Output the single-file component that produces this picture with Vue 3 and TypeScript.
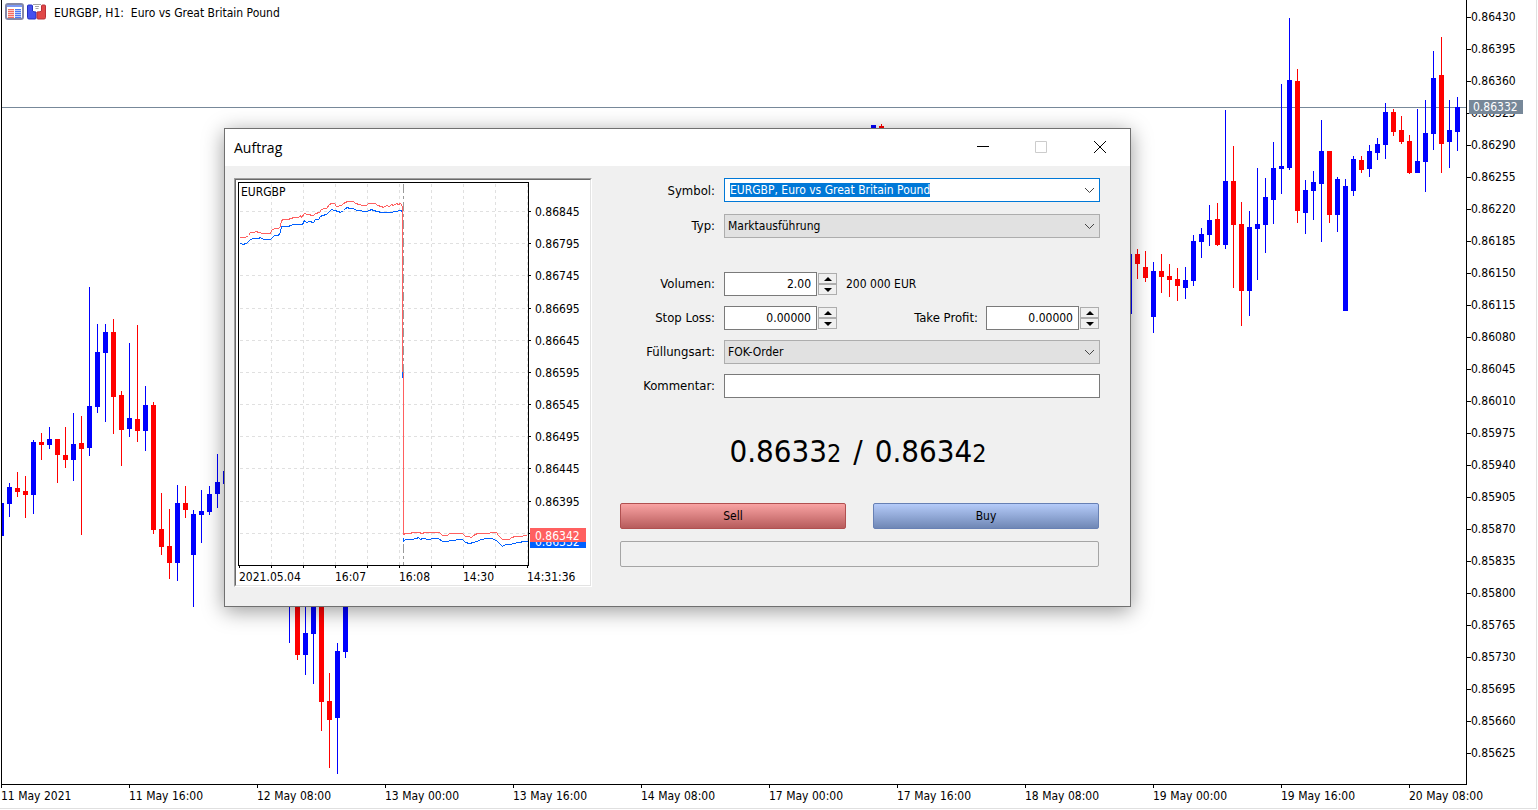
<script setup lang="ts">
import { onMounted, ref } from 'vue'

type Candle = [x: number, color: 'b' | 'r', high: number, top: number, bottom: number, low: number]

const candles: Candle[] = [
  [1, 'b', 503, 503, 536, 536], [9, 'b', 483, 487, 504, 517], [17, 'r', 472, 488, 492, 497],
  [25, 'r', 476, 491, 495, 518], [33, 'b', 440, 442, 495, 514], [41, 'r', 433, 442, 445, 460],
  [49, 'b', 427, 439, 445, 449], [57, 'r', 439, 439, 455, 483], [65, 'r', 427, 455, 460, 468],
  [73, 'b', 413, 444, 460, 481], [81, 'r', 416, 443, 449, 535], [89, 'b', 287, 406, 448, 456],
  [97, 'b', 324, 352, 407, 413], [105, 'b', 324, 332, 353, 422], [113, 'r', 319, 332, 397, 434],
  [121, 'r', 391, 395, 430, 466], [129, 'b', 343, 418, 429, 437], [137, 'r', 325, 419, 431, 442],
  [145, 'b', 386, 405, 431, 451], [153, 'r', 402, 405, 530, 534], [161, 'r', 493, 529, 547, 555],
  [169, 'r', 509, 546, 563, 579], [177, 'b', 485, 503, 563, 581], [185, 'r', 486, 503, 510, 518],
  [193, 'b', 510, 514, 555, 607], [201, 'b', 490, 511, 515, 543], [209, 'b', 486, 494, 512, 515],
  [217, 'b', 454, 482, 494, 508], [225, 'b', 471, 471, 484, 484],
  [289, 'b', 560, 580, 590, 643], [297, 'r', 560, 590, 655, 660], [305, 'b', 590, 633, 655, 675],
  [313, 'b', 590, 600, 634, 684], [321, 'r', 590, 600, 702, 731], [329, 'r', 673, 701, 720, 768],
  [337, 'b', 643, 651, 718, 774], [345, 'b', 560, 590, 652, 658],
  [873, 'b', 125, 125, 140, 145], [881, 'r', 124, 126, 140, 145],
  [1129, 'b', 254, 254, 314, 314], [1137, 'r', 249, 254, 264, 279], [1145, 'r', 251, 267, 278, 282],
  [1153, 'b', 262, 271, 317, 333], [1161, 'r', 254, 271, 277, 293], [1169, 'r', 264, 276, 280, 297],
  [1177, 'r', 268, 279, 286, 301], [1185, 'b', 267, 280, 288, 299], [1193, 'b', 235, 241, 281, 286],
  [1201, 'b', 228, 234, 242, 258], [1209, 'b', 205, 220, 235, 246], [1217, 'r', 203, 219, 245, 246],
  [1225, 'b', 110, 181, 245, 249], [1233, 'r', 146, 181, 225, 288], [1241, 'r', 202, 224, 291, 326],
  [1249, 'b', 211, 227, 291, 316], [1257, 'b', 168, 224, 229, 280], [1265, 'b', 178, 197, 225, 253],
  [1273, 'b', 142, 168, 200, 224], [1281, 'b', 84, 166, 169, 194], [1289, 'b', 18, 80, 168, 170],
  [1297, 'r', 69, 81, 211, 223], [1305, 'b', 180, 190, 213, 234], [1313, 'b', 171, 182, 191, 220],
  [1321, 'b', 120, 151, 184, 242], [1329, 'r', 151, 151, 215, 223], [1337, 'b', 177, 179, 215, 232],
  [1345, 'b', 179, 186, 311, 311], [1353, 'b', 156, 159, 191, 196], [1361, 'r', 156, 160, 170, 173],
  [1369, 'b', 145, 151, 169, 177], [1377, 'b', 138, 144, 153, 160], [1385, 'b', 103, 112, 145, 159],
  [1393, 'r', 109, 112, 132, 136], [1401, 'r', 116, 130, 142, 144], [1409, 'r', 135, 141, 173, 174],
  [1417, 'b', 109, 161, 173, 173], [1425, 'b', 100, 133, 162, 192], [1433, 'b', 51, 78, 134, 150],
  [1441, 'r', 37, 75, 144, 173], [1449, 'b', 100, 130, 142, 168], [1457, 'b', 97, 107, 132, 151],
]

const prices = Array.from({ length: 24 }, (_, i) => ((86430 - i * 35) / 100000).toFixed(5))

const times = [
  '11 May 2021', '11 May 16:00', '12 May 08:00', '13 May 00:00', '13 May 16:00', '14 May 08:00',
  '17 May 00:00', '17 May 16:00', '18 May 08:00', '19 May 00:00', '19 May 16:00', '20 May 08:00',
]

const tickRows = [211, 243, 275, 308, 340, 372, 404, 436, 468, 501, 533]
const tickCols = [271, 303, 335, 367, 399, 431, 463, 495, 527]
const tickPrices = tickRows.slice(0, 10).map((y, i) => ({ y, text: ((86845 - i * 50) / 100000).toFixed(5) }))
const tickTimes = [
  { x: 239, text: '2021.05.04' },
  { x: 335, text: '16:07' },
  { x: 399, text: '16:08' },
  { x: 463, text: '14:30' },
  { x: 527, text: '14:31:36' },
]

const askBefore =
  '239,237 245,237 248,235 250,232 253,232 256,231 258,232 260,232 261,233 270,233 271,230 274,228 278,228 280,226 281,220 283,219 288,219 290,218 294,217 298,217 300,215 301,217 304,213 307,214 313,215 315,213 319,212 321,209 324,208 326,208 329,204 331,203 334,203 336,206 341,205 343,203 345,202 347,201 353,201 355,203 359,204 362,205 366,205 368,203 375,203 377,205 381,206 383,207 386,205 389,206 391,204 393,205 396,203 398,204 400,203 402,206 402,372'
const bidBefore =
  '239,243 241,243 242,244 246,243 248,241 250,239 253,238 258,238 260,237 263,239 270,239 272,237 274,235 277,235 279,234 280,231 281,226 288,226 290,225 293,224 302,224 304,220 306,222 309,221 313,222 315,219 318,219 320,216 322,215 326,214 329,211 331,209 334,210 338,211 340,212 343,210 345,208 347,207 349,208 353,208 356,210 366,211 369,210 371,209 373,210 377,211 381,212 391,212 394,211 401,210 402,212'
const askAfter =
  '403,372 403,534 405,533 409,533 413,532 419,532 421,533 425,532 439,532 442,535 447,535 449,533 462,533 465,536 468,536 471,537 473,535 477,533 483,533 496,532 498,535 502,539 509,539 511,537 515,536 519,536 527,535'
const bidAfter =
  '403,537 403,541 405,539 411,539 416,538 418,537 420,539 422,538 429,539 432,538 438,538 442,541 447,541 450,540 462,539 465,542 469,543 473,542 476,541 481,539 486,538 491,538 496,540 500,544 502,546 505,544 510,544 513,543 519,542 523,541 527,541'

const symbol = ref('EURGBP, Euro vs Great Britain Pound')
const volume = ref('2.00')
const stopLoss = ref('0.00000')
const takeProfit = ref('0.00000')
const comment = ref('')
const symbolInput = ref<HTMLInputElement | null>(null)

function step(current: string, delta: number): string {
  const digits = current.split('.')[1]?.length ?? 0
  return Math.max(0, Number(current) + delta).toFixed(digits)
}

onMounted(() => {
  symbolInput.value?.focus()
  symbolInput.value?.select()
})
</script>

<template>
  <main class="terminal">
    <section class="plot" aria-label="EURGBP, H1">
      <svg class="candles" viewBox="2 0 1464 784" preserveAspectRatio="none" aria-hidden="true">
        <rect x="2" y="107" width="1464" height="1" fill="#778899" />
        <g v-for="c in candles" :key="c[0]" :fill="c[1] === 'b' ? '#0000ff' : '#ff0000'">
          <rect :x="c[0]" :y="c[2]" width="1" :height="c[5] - c[2]" />
          <rect :x="c[0] - 2" :y="c[3]" width="5" :height="c[4] - c[3]" />
        </g>
      </svg>
      <header class="caption">
        <svg width="20" height="18" viewBox="0 0 20 18" aria-hidden="true">
          <rect x="1" y="1" width="17" height="15" rx="2" fill="#fff" stroke="#8488a8" stroke-width="2" />
          <rect x="2" y="2" width="15" height="2" fill="#7c98f4" />
          <rect x="3" y="6" width="6" height="9" fill="#fcc8c0" />
          <rect x="10" y="6" width="6" height="9" fill="#b8ccfc" />
          <path d="M3 6.500h6M3 8.500h6M3 10.500h6M3 12.500h6M3 14.500h6" stroke="#f46c60" />
          <path d="M10 6.500h6M10 8.500h6M10 10.500h6M10 12.500h6M10 14.500h6" stroke="#4c78f4" />
        </svg>
        <svg width="20" height="18" viewBox="0 0 20 18" aria-hidden="true">
          <path d="M.5 3q0-1 1-1h3q1 0 1 1v5q1 1 3.500 1v6q0 1-1 1H2q-1.500 0-1.500-1.500z" fill="#4450f0" stroke="#2430c0" />
          <path d="M18.500 3q0-1-1-1h-2q-1 0-1 1v5q-1 1-4.500 1v6q0 1 1 1h6q1.500 0 1.500-1.500z" fill="#e04848" stroke="#b83038" />
          <path d="M6 1.500h8M8 3.500h4M8.500 5.500h3" stroke="#a4a4a4" />
        </svg>
        <h1>EURGBP, H1:&nbsp; Euro vs Great Britain Pound</h1>
      </header>
    </section>

    <aside class="price-axis">
      <span v-for="p in prices" :key="p">{{ p }}</span>
      <strong class="price-tag">0.86332</strong>
    </aside>

    <footer class="time-axis">
      <span v-for="t in times" :key="t">{{ t }}</span>
    </footer>

    <div class="dialog" role="dialog" aria-labelledby="dialog-title">
      <div class="titlebar">
        <h2 id="dialog-title">Auftrag</h2>
        <button type="button" aria-label="Minimieren">
          <svg width="13" height="13" viewBox="0 0 13 13"><path d="M1 5.500h12" stroke="#000" /></svg>
        </button>
        <button type="button" aria-label="Maximieren" disabled>
          <svg width="13" height="13" viewBox="0 0 13 13"><path d="M.5.5h11v11H.5z" fill="none" stroke="#ccc" /></svg>
        </button>
        <button type="button" aria-label="Schließen">
          <svg width="13" height="13" viewBox="0 0 13 13"><path d="M0 0l12 12M12 0L0 12" stroke="#000" /></svg>
        </button>
      </div>

      <div class="body">
        <div class="ticks">
          <svg width="354" height="405" viewBox="236 180 354 405" role="img" aria-label="EURGBP">
            <g transform="translate(.5 .5)" fill="none" shape-rendering="crispEdges">
              <g stroke="#e0e0e0" stroke-dasharray="3 3">
                <path v-for="y in tickRows" :key="y" :d="`M239 ${y}H527`" />
                <path v-for="x in tickCols" :key="x" :d="`M${x} 183V564`" />
              </g>
              <path d="M403 183V564" stroke="#999" stroke-dasharray="9 3 3 3" />
              <polyline :points="bidBefore" stroke="#0060ff" />
              <polyline :points="askBefore" stroke="#ff6060" />
              <polyline :points="bidAfter" stroke="#0060ff" />
              <polyline :points="askAfter" stroke="#ff6060" />
              <path d="M402 371V377" stroke="#0060ff" />
              <path d="M238 182H528V565H238Z" stroke="#000" />
              <path v-for="y in tickRows" :key="y" :d="`M528 ${y}h2`" stroke="#000" />
              <path v-for="x in [239, ...tickCols]" :key="x" :d="`M${x} 565v2`" stroke="#000" />
            </g>
            <text x="241" y="196">EURGBP</text>
            <text v-for="p in tickPrices" :key="p.y" x="535" :y="p.y + 5">{{ p.text }}</text>
            <text v-for="t in tickTimes" :key="t.x" :x="t.x" y="581">{{ t.text }}</text>
            <rect x="530" y="535" width="56" height="13" fill="#0060ff" />
            <text x="535" y="546" fill="#fff">0.86332</text>
            <rect x="530" y="528" width="56" height="14" fill="#ff6060" />
            <text x="535" y="540" fill="#fff">0.86342</text>
          </svg>
        </div>

        <form class="order" @submit.prevent>
          <div class="fields">
            <label for="symbol">Symbol:</label>
            <div class="combo active">
              <input id="symbol" ref="symbolInput" v-model="symbol" type="text" role="combobox" aria-expanded="false" spellcheck="false" />
              <svg width="11" height="7" viewBox="0 0 11 7"><path d="M1 1l4.500 4.500L10 1" fill="none" stroke="#444" /></svg>
            </div>

            <label for="type">Typ:</label>
            <div class="combo">
              <select id="type"><option>Marktausführung</option></select>
              <svg width="11" height="7" viewBox="0 0 11 7"><path d="M1 1l4.500 4.500L10 1" fill="none" stroke="#444" /></svg>
            </div>

            <label class="spaced" for="volume">Volumen:</label>
            <div class="line spaced">
              <div class="number">
                <input id="volume" v-model="volume" type="text" />
                <div class="spin">
                  <button type="button" aria-label="Volumen erhöhen" @click="volume = step(volume, 1)"><svg width="8" height="4" viewBox="0 0 8 4"><path d="M0 4L4 0L8 4z" /></svg></button>
                  <button type="button" aria-label="Volumen verringern" @click="volume = step(volume, -1)"><svg width="8" height="4" viewBox="0 0 8 4"><path d="M0 0L4 4L8 0z" /></svg></button>
                </div>
              </div>
              <output for="volume">200 000 EUR</output>
            </div>

            <label for="sl">Stop Loss:</label>
            <div class="line">
              <div class="number">
                <input id="sl" v-model="stopLoss" type="text" />
                <div class="spin">
                  <button type="button" aria-label="Stop Loss erhöhen" @click="stopLoss = step(stopLoss, 0.00001)"><svg width="8" height="4" viewBox="0 0 8 4"><path d="M0 4L4 0L8 4z" /></svg></button>
                  <button type="button" aria-label="Stop Loss verringern" @click="stopLoss = step(stopLoss, -0.00001)"><svg width="8" height="4" viewBox="0 0 8 4"><path d="M0 0L4 4L8 0z" /></svg></button>
                </div>
              </div>
              <label class="tp" for="tp">Take Profit:</label>
              <div class="number">
                <input id="tp" v-model="takeProfit" type="text" />
                <div class="spin">
                  <button type="button" aria-label="Take Profit erhöhen" @click="takeProfit = step(takeProfit, 0.00001)"><svg width="8" height="4" viewBox="0 0 8 4"><path d="M0 4L4 0L8 4z" /></svg></button>
                  <button type="button" aria-label="Take Profit verringern" @click="takeProfit = step(takeProfit, -0.00001)"><svg width="8" height="4" viewBox="0 0 8 4"><path d="M0 0L4 4L8 0z" /></svg></button>
                </div>
              </div>
            </div>

            <label for="filling">Füllungsart:</label>
            <div class="combo">
              <select id="filling"><option>FOK-Order</option></select>
              <svg width="11" height="7" viewBox="0 0 11 7"><path d="M1 1l4.500 4.500L10 1" fill="none" stroke="#444" /></svg>
            </div>

            <label for="comment">Kommentar:</label>
            <input id="comment" v-model="comment" class="comment" type="text" />
          </div>

          <p class="quote">
            <span>0.8633<small>2</small></span>
            <span>/</span>
            <span>0.8634<small>2</small></span>
          </p>

          <div class="actions">
            <button class="sell" type="button">Sell</button>
            <button class="buy" type="button">Buy</button>
            <div class="status" role="status"></div>
          </div>
        </form>
      </div>
    </div>
  </main>
</template>

<style>
body {
  margin: 0;
  background: #fff;
}
</style>

<style scoped>
* {
  box-sizing: border-box;
}

.terminal {
  position: relative;
  display: grid;
  grid-template-columns: minmax(0, 1fr) 69px;
  grid-template-rows: minmax(0, 1fr) 23px;
  height: calc(100vh - 1px);
  margin-right: 1px;
  border-right: 1px solid #e0e0e0;
  border-bottom: 1px solid #e0e0e0;
  overflow: hidden;
  color: #000;
  font: 12px/16px "DejaVu Sans Condensed", "DejaVu Sans", sans-serif;
}

.plot {
  display: grid;
  margin-left: 1px;
  border: 1px solid #000;
  border-top: 0;
}

.candles,
.caption {
  grid-area: 1 / 1;
}

.candles {
  display: block;
  width: 100%;
  height: 100%;
  shape-rendering: crispEdges;
}

.caption {
  display: flex;
  align-items: flex-start;
  align-self: start;
  gap: 2px;
  padding: 3px 0 0 3px;
}

.caption h1 {
  margin: 2px 0 0 5px;
  font: inherit;
}

.price-axis {
  position: relative;
  display: flex;
  flex-direction: column;
  justify-content: space-between;
  padding: 9px 0 24px;
}

.price-axis span {
  display: flex;
  align-items: center;
}

.price-axis span::before {
  width: 4px;
  height: 1px;
  background: #000;
  content: "";
}

.price-tag {
  position: absolute;
  top: 100px;
  left: 2px;
  width: 54px;
  padding-left: 4px;
  background: #778899;
  color: #fff;
  font-weight: 400;
  line-height: 14px;
}

.time-axis {
  display: grid;
  grid-column: 1 / -1;
  grid-template-columns: repeat(12, minmax(0, 1fr));
  margin-left: 1px;
  margin-right: -1px;
}

.time-axis span {
  white-space: nowrap;
}

.time-axis span::before {
  display: block;
  width: 1px;
  height: 3px;
  background: #000;
  content: "";
}

.dialog {
  position: absolute;
  top: 128px;
  left: 224px;
  width: 907px;
  border: 1px solid #707070;
  background: #f0f0f0;
  box-shadow: 0 4px 20px rgba(0, 0, 0, 0.4);
}

.titlebar {
  display: flex;
  height: 37px;
  padding-left: 9px;
  background: #fff;
}

.titlebar h2 {
  margin: 0 auto 0 0;
  font: 14px/37px "Open Sans", sans-serif;
}

.titlebar button {
  display: grid;
  place-items: center;
  width: 59px;
  padding: 0;
  border: 0;
  background: none;
}

.body {
  display: flex;
  align-items: flex-start;
  gap: 28px;
  padding: 12px 30px 19px 9px;
}

.ticks {
  flex: none;
  border: 1px solid;
  border-color: #a0a0a0 #fff #fff #a0a0a0;
}

.ticks svg {
  display: block;
  box-sizing: content-box;
  border: 1px solid;
  border-color: #696969 #e3e3e3 #e3e3e3 #696969;
  background: #fff;
}

.order {
  flex: 1;
  min-width: 0;
}

.fields {
  display: grid;
  grid-template-columns: 95px minmax(0, 1fr);
  align-items: center;
  gap: 10px 9px;
}

.fields label {
  font-size: 13px;
}

.fields > label {
  justify-self: end;
}

.fields > .spaced {
  margin-top: 24px;
}

input,
select,
button {
  color: #000;
  font: inherit;
}

input,
select {
  height: 24px;
  border: 1px solid #7a7a7a;
  border-radius: 0;
  outline: 0;
  background: #fff;
}

.combo {
  position: relative;
}

.combo svg {
  position: absolute;
  top: 9px;
  right: 5px;
  pointer-events: none;
}

.combo input,
.combo select {
  display: block;
  width: 100%;
  appearance: none;
}

.combo select {
  padding: 0 24px 0 3px;
  border-color: #adadad;
  background: #e1e1e1;
}

.combo input {
  padding: 0 24px 0 5px;
  border-color: #0078d7;
}

.active {
  margin-bottom: 2px;
}

.combo input::selection {
  background: #0078d7;
  color: #fff;
}

.line {
  display: flex;
  align-items: center;
  padding-right: 1px;
}

.line output {
  margin-left: 9px;
}

.number {
  display: flex;
  align-items: center;
  gap: 1px;
}

.number input {
  width: 93px;
  padding: 0 5px;
  text-align: right;
}

.spin {
  display: grid;
  width: 19px;
}

.spin button {
  display: grid;
  place-items: center;
  height: 11px;
  padding: 0;
  border: 1px solid #adadad;
  background: #f0f0f0;
}

.tp {
  margin: 0 8px 0 auto;
}

.comment {
  width: 100%;
}

.quote {
  display: flex;
  justify-content: center;
  align-items: baseline;
  gap: 12px;
  margin: 33px 0 32px;
  padding-right: 4px;
  font-size: 31px;
  line-height: 40px;
}

.quote small {
  font-size: 25px;
  line-height: 1;
}

.actions {
  display: grid;
  grid-template-columns: 1fr 1fr;
  gap: 12px 27px;
  padding-right: 1px;
}

.actions > * {
  height: 26px;
  border: 1px solid #a5a5a5;
  border-radius: 2px;
}

.actions .sell {
  border-color: #b05050;
  background: linear-gradient(#f9a3a3, #b75c5c);
}

.actions .buy {
  border-color: #6780b4;
  background: linear-gradient(#b5cbf9, #6f87b5);
}

.status {
  grid-column: 1 / -1;
}
</style>
